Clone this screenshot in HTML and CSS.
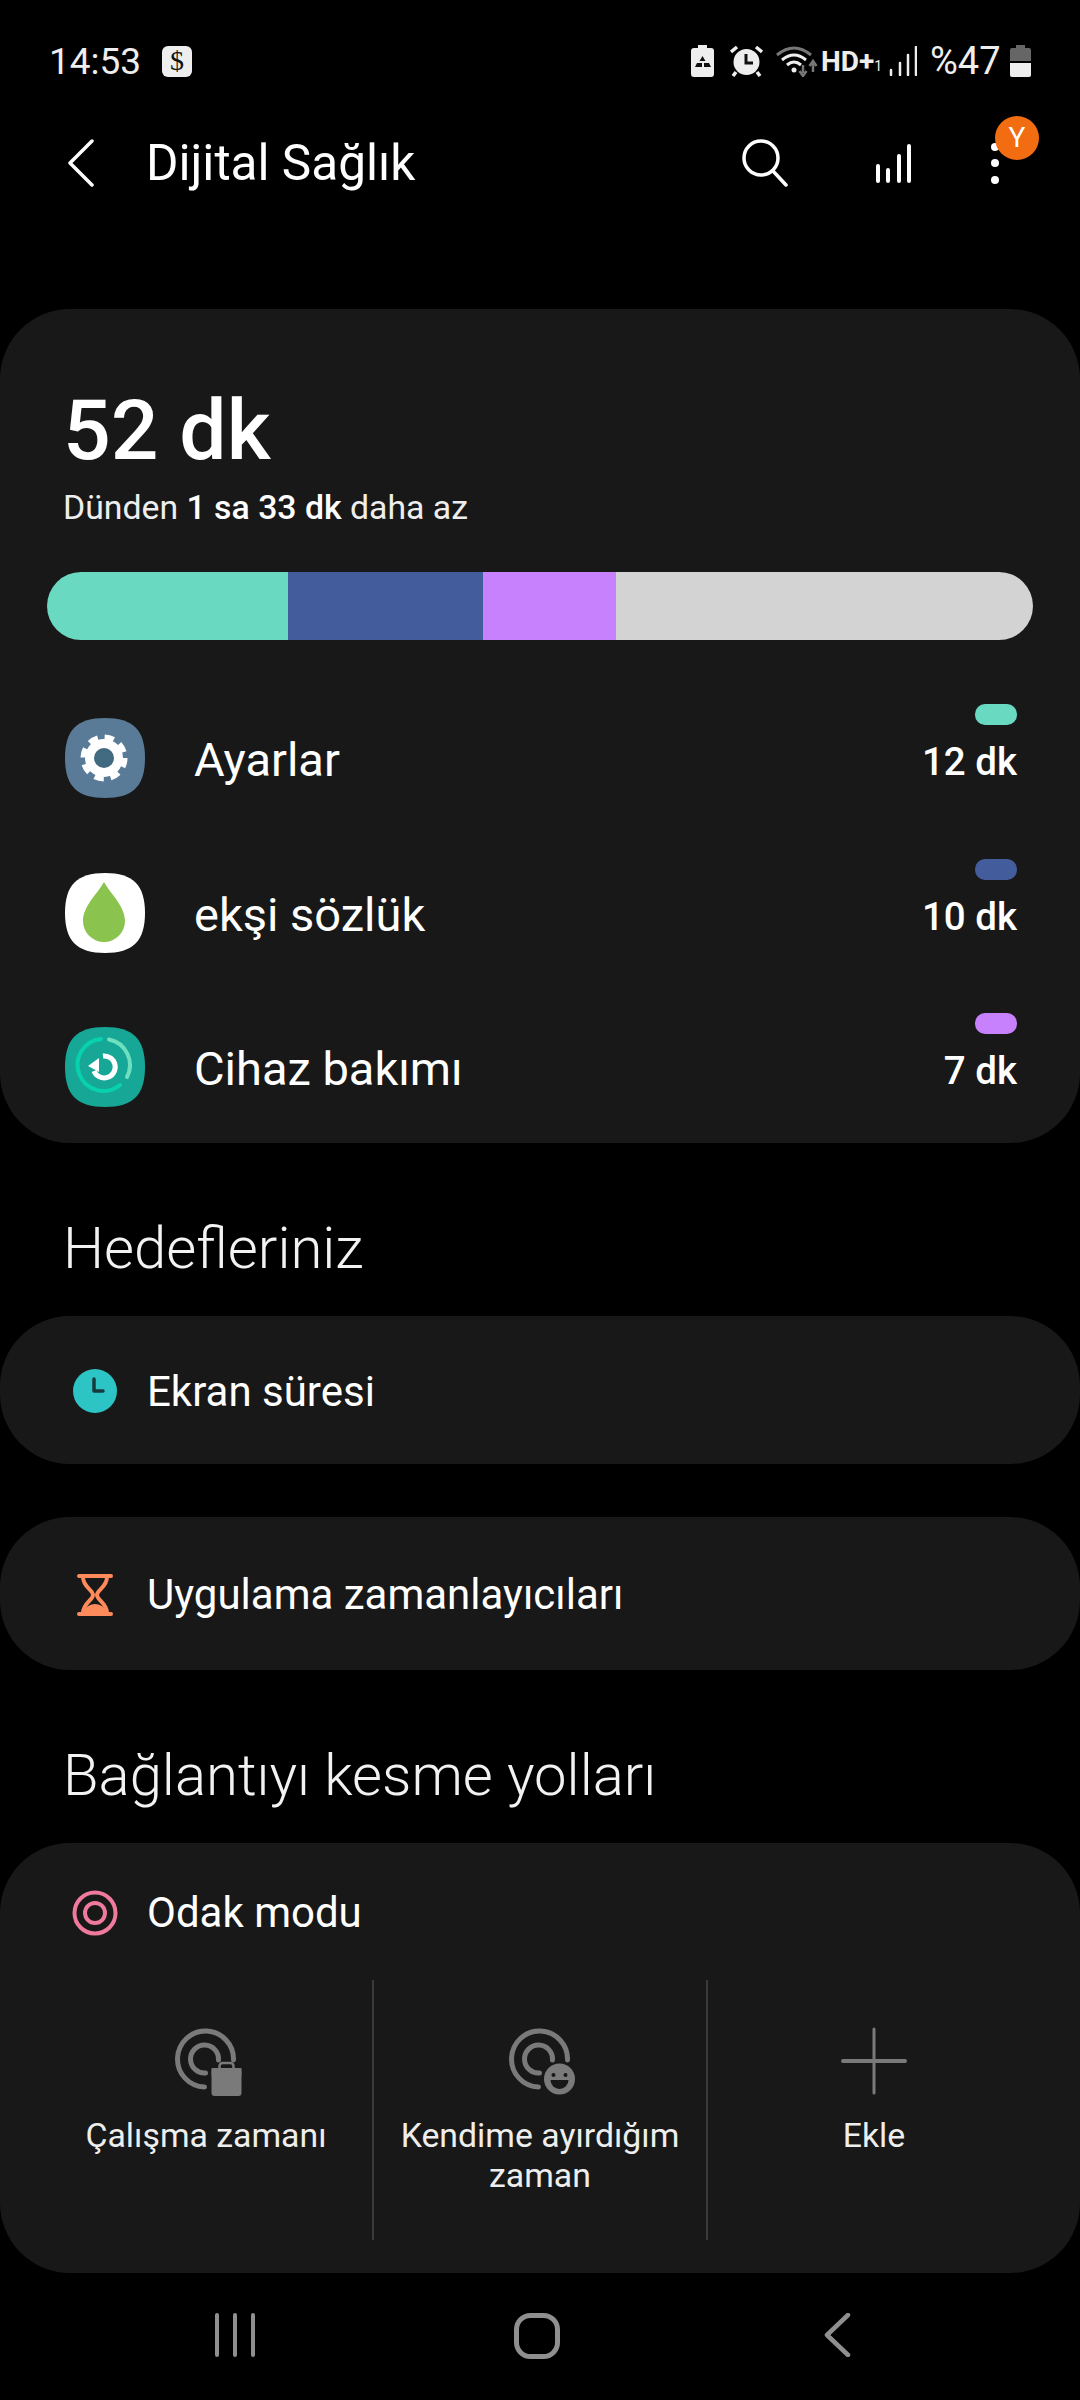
FILE: index.html
```html
<!DOCTYPE html>
<html lang="tr">
<head>
    <meta charset="UTF-8">
    <meta name="viewport" content="width=device-width, initial-scale=1.0">
    <title>Dijital Sağlık</title>
    <link rel="stylesheet" href="styles.css">
</head>
<body>

    <div class="status-bar">
        <span class="clock">14:53</span>
        <span class="bank-badge">$</span>
        <div class="status-right">
            <svg class="st-saver" width="23" height="32" viewBox="0 0 23 32"><path d="M7 0h9v3h4q3 0 3 3v23q0 3-3 3H3q-3 0-3-3V6q0-3 3-3h4z" fill="#eee"/><path d="M11.500 11l3 5h-6zM6 18h5v4H4zM13 18h5l2 4h-7z" fill="#111"/></svg>
            <svg class="st-alarm" width="33" height="32" viewBox="0 0 33 32"><circle cx="16.500" cy="17" r="13" fill="#eee"/><path d="M16 9v9h7" fill="none" stroke="#111" stroke-width="3"/><path d="M1 7l6-5M32 7l-6-5M6 27l-3 4M27 27l3 4" stroke="#eee" stroke-width="3.500"/></svg>
            <svg class="st-wifi" width="42" height="32" viewBox="0 0 42 32"><path d="M1 10q17-14 34 0" fill="none" stroke="#777" stroke-width="3"/><path d="M6 15q12-10 24 0M11 20q7-6 14 0" fill="none" stroke="#eee" stroke-width="3"/><circle cx="18" cy="25" r="2.500" fill="#eee"/><path d="M27 20v8M23.500 26l3.500 5 3.500-5M37 27v-10M33.500 21l3.500-5 3.500 5" fill="none" stroke="#777" stroke-width="2.500"/></svg>
            <span class="st-hd">HD+<span class="st-sim">1</span></span>
            <svg class="st-signal" width="28" height="30" viewBox="0 0 28 30"><path d="M2 24v5M11 17v12M19 9v20M27 1v28" stroke="#eee" stroke-width="2.500" stroke-linecap="round"/></svg>
            <span class="st-pct">%47</span>
            <svg class="st-batt" width="21" height="32" viewBox="0 0 21 32"><path d="M6 0h9v3h4q2 0 2 2v11H0V5q0-2 2-2h4z" fill="#666"/><path d="M0 18h21v12q0 2-2 2H2q-2 0-2-2z" fill="#eee"/></svg>
        </div>
    </div>

    <div class="app-bar">
        <svg class="back-icon" width="26" height="48" viewBox="0 0 26 48"><path d="M24 2L2 24l22 22" fill="none" stroke="#fff" stroke-width="3.500" stroke-linecap="round" stroke-linejoin="round"/></svg>
        <span class="app-title">Dijital Sağlık</span>
        <div class="app-actions">
            <svg width="46" height="48" viewBox="0 0 46 48"><circle cx="19" cy="19" r="17" fill="none" stroke="#fff" stroke-width="3.500"/><path d="M31 32l13 14" stroke="#fff" stroke-width="3.500" stroke-linecap="round"/></svg>
            <svg class="bars-icon" width="38" height="40" viewBox="0 0 38 40"><path d="M3 23v15M13 27v11M24 13v25M34 3v35" stroke="#fff" stroke-width="4" stroke-linecap="round"/></svg>
            <div class="more-btn">
                <i class="dot"></i><i class="dot"></i><i class="dot"></i>
                <span class="new-badge">Y</span>
            </div>
        </div>
    </div>

    <div class="card usage-card">
        <div class="total">52 dk</div>
        <div class="compare">Dünden <b>1 sa 33 dk</b> daha az</div>
        <div class="usage-bar">
            <span class="seg seg-one"></span>
            <span class="seg seg-two"></span>
            <span class="seg seg-three"></span>
            <span class="seg seg-rest"></span>
        </div>

        <div class="app-row">
            <svg class="app-icon" width="80" height="80" viewBox="0 0 80 80"><path class="squircle" d="M40 0C68 0 80 12 80 40S68 80 40 80 0 68 0 40 12 0 40 0Z" fill="#5a7b97"/><circle cx="39" cy="40" r="19" fill="#fff"/><circle cx="39" cy="40" r="21" fill="none" stroke="#fff" stroke-width="5" stroke-dasharray="9.500 7"/><circle cx="39" cy="40" r="10" fill="#41697f"/></svg>
            <span class="app-name">Ayarlar</span>
            <div class="app-time">
                <span class="chip chip-one"></span>
                <span>12 dk</span>
            </div>
        </div>
        <div class="app-row">
            <svg class="app-icon" width="80" height="80" viewBox="0 0 80 80"><path d="M40 0C68 0 80 12 80 40S68 80 40 80 0 68 0 40 12 0 40 0Z" fill="#fff"/><path d="M39 9C33 20 18 33 18 48A21 21 0 0 0 60 48C60 33 45 20 39 9Z" fill="#8bc34f"/></svg>
            <span class="app-name">ekşi sözlük</span>
            <div class="app-time">
                <span class="chip chip-two"></span>
                <span>10 dk</span>
            </div>
        </div>
        <div class="app-row">
            <svg class="app-icon" width="80" height="80" viewBox="0 0 80 80"><path d="M40 0C68 0 80 12 80 40S68 80 40 80 0 68 0 40 12 0 40 0Z" fill="#17a797"/><path d="M36 12A26 26 0 1 0 55 58" fill="none" stroke="#08d2ae" stroke-width="4" stroke-linecap="round"/><path d="M44 12.500A26 26 0 0 1 62 50" fill="none" stroke="#6ee0c0" stroke-width="4" stroke-linecap="round"/><path d="M38 29A11 11 0 1 1 29 44" fill="none" stroke="#fff" stroke-width="5"/><path d="M23 39l11-8v14z" fill="#fff"/></svg>
            <span class="app-name">Cihaz bakımı</span>
            <div class="app-time">
                <span class="chip chip-three"></span>
                <span>7 dk</span>
            </div>
        </div>
    </div>

    <h2 class="section-title">Hedefleriniz</h2>

    <div class="card link-card screen-card">
        <svg class="link-icon" width="46" height="46" viewBox="0 0 46 46"><circle cx="23" cy="23" r="22" fill="#2cc4c4"/><path d="M22 11v12h9" fill="none" stroke="#173a3c" stroke-width="3.500" stroke-linecap="round" stroke-linejoin="round"/></svg>
        <span>Ekran süresi</span>
    </div>

    <div class="card link-card timer-card">
        <svg class="link-icon" width="46" height="42" viewBox="0 0 46 42"><path d="M7 2h32M7 40h32" stroke="#ff8a5b" stroke-width="4" stroke-linecap="round"/><path d="M11 3c0 10 10 13 10 18S11 29 11 39M35 3c0 10-10 13-10 18s10 8 10 18" fill="none" stroke="#ff8a5b" stroke-width="4"/><path d="M11 39c1-6 8-9 12-9s11 3 12 9z" fill="#ff8a5b"/></svg>
        <span>Uygulama zamanlayıcıları</span>
    </div>

    <h2 class="section-title">Bağlantıyı kesme yolları</h2>

    <div class="card focus-card">
        <div class="focus-head">
            <svg class="link-icon" width="46" height="46" viewBox="0 0 46 46"><circle cx="23" cy="23" r="20.500" fill="none" stroke="#f07a9e" stroke-width="4"/><circle cx="23" cy="23" r="10" fill="none" stroke="#f07a9e" stroke-width="4"/></svg>
            <span>Odak modu</span>
        </div>
        <div class="focus-grid">
            <div class="focus-item">
                <svg width="80" height="70" viewBox="1.500 0 80 70"><path d="M69 34A28 28 0 1 0 40 61" fill="none" stroke="#7a7a7a" stroke-width="5" stroke-linecap="round"/><path d="M54 34A14 14 0 1 0 41 47" fill="none" stroke="#7a7a7a" stroke-width="5" stroke-linecap="round"/><path d="M47 42h30v25q0 3-3 3H50q-3 0-3-3z" fill="#7a7a7a"/><rect x="47" y="42" width="30" height="10" rx="4" fill="#7a7a7a"/><rect x="55" y="37" width="14" height="9" rx="3" fill="none" stroke="#7a7a7a" stroke-width="2.500"/></svg>
                <span>Çalışma zamanı</span>
            </div>
            <div class="focus-item">
                <svg width="80" height="70" viewBox="1.500 0 80 70"><path d="M69 34A28 28 0 1 0 40 61" fill="none" stroke="#7a7a7a" stroke-width="5" stroke-linecap="round"/><path d="M54 34A14 14 0 1 0 41 47" fill="none" stroke="#7a7a7a" stroke-width="5" stroke-linecap="round"/><circle cx="61" cy="53" r="15.500" fill="#7a7a7a"/><circle cx="55" cy="49" r="2" fill="#181818"/><circle cx="67" cy="49" r="2" fill="#181818"/><path d="M52 54h18a9 9 0 0 1-18 0z" fill="#181818"/></svg>
                <span>Kendime ayırdığım zaman</span>
            </div>
            <div class="focus-item">
                <svg width="80" height="70" viewBox="0 0 80 70"><path d="M40 3v64" stroke="#7a7a7a" stroke-width="3" stroke-linecap="round"/><path d="M9 35h62" stroke="#7a7a7a" stroke-width="4" stroke-linecap="round"/></svg>
                <span>Ekle</span>
            </div>
        </div>
    </div>

    <div class="nav-bar">
        <svg width="44" height="44" viewBox="0 0 44 44"><path d="M4 2v40M22 2v40M40 2v40" stroke="#8f8f8f" stroke-width="4" stroke-linecap="round"/></svg>
        <svg class="nav-home" width="46" height="46" viewBox="0 0 46 46"><rect x="2.500" y="2.500" width="41" height="41" rx="14" fill="none" stroke="#8f8f8f" stroke-width="5"/></svg>
        <svg width="28" height="44" viewBox="0 0 28 44"><path d="M25 2L4 22l21 20" fill="none" stroke="#8f8f8f" stroke-width="4.500" stroke-linecap="round" stroke-linejoin="round"/></svg>
    </div>

</body>
</html>
```

FILE: styles.css
```css
* {
    box-sizing: border-box;
}

body {
    width: 1080px;
    height: 2400px;
    margin: 0;
    background-color: black;
    color: white;
    font-family: Roboto, "Noto Sans", sans-serif;
    overflow: hidden;
}

/* status bar */
.status-bar {
    display: flex;
    align-items: center;
    height: 122px;
    padding: 0 49px 0 49px;
    color: #eee;
}

.clock {
    font-size: 37px;
    width: 113px;
}

.bank-badge {
    display: flex;
    align-items: center;
    justify-content: center;
    width: 30px;
    height: 31px;
    border-radius: 6px;
    background-color: #eee;
    color: #111;
    font-family: "Liberation Serif", serif;
    font-size: 28px;
}

.status-right {
    display: flex;
    align-items: center;
    margin-left: auto;
}

.st-alarm {
    margin-left: 16px;
}

.st-wifi {
    margin-left: 13px;
}

.st-hd {
    margin-left: 3px;
    font-size: 28px;
    font-weight: bold;
    width: 68px;
}

.st-sim {
    font-size: 14px;
    font-weight: normal;
}

.st-pct {
    margin-left: 13px;
    font-size: 38px;
    width: 80px;
}

/* app bar */
.app-bar {
    display: flex;
    align-items: center;
    height: 82px;
    padding-left: 68px;
}

.app-title {
    margin-left: 52px;
    font-size: 49.500px;
}

.app-actions {
    display: flex;
    align-items: center;
    margin-left: auto;
}

.bars-icon {
    margin-left: 87px;
}

.more-btn {
    position: relative;
    display: flex;
    flex-direction: column;
    align-items: center;
    gap: 8.500px;
    width: 8px;
    margin-left: 78px;
    margin-right: 81px;
}

.dot {
    width: 8px;
    height: 8px;
    border-radius: 50%;
    background-color: white;
}

.new-badge {
    position: absolute;
    top: -27px;
    left: 4px;
    display: flex;
    align-items: center;
    justify-content: center;
    width: 44px;
    height: 44px;
    border-radius: 50%;
    background-color: #f26c12;
    font-size: 28px;
}

/* cards */
.card {
    background-color: #181818;
    border-radius: 70px;
}

.usage-card {
    height: 834px;
    margin-top: 105px;
    padding-top: 77px;
}

.total {
    margin-left: 63px;
    height: 90px;
    line-height: 90px;
    font-size: 84px;
    font-weight: 500;
}

.compare {
    margin-left: 63px;
    margin-top: 10px;
    height: 44px;
    line-height: 44px;
    font-size: 33.800px;
    color: #eee;
}

.compare b {
    font-weight: 500;
    color: white;
}

.usage-bar {
    display: flex;
    height: 68px;
    margin: 42px 47px 41px 47px;
    border-radius: 34px;
    overflow: hidden;
}

.seg-one {
    width: 241px;
    background-color: #69d9c2;
}

.seg-two {
    width: 195px;
    background-color: #435c9b;
}

.seg-three {
    width: 133px;
    background-color: #c781fc;
}

.seg-rest {
    flex: 1;
    background-color: #d3d3d3;
}

.app-row {
    display: flex;
    align-items: center;
    height: 154.500px;
    padding: 0 63px 0 65px;
}

.app-name {
    margin-left: 49px;
    font-size: 47px;
    padding-top: 3px;
}

.app-time {
    display: flex;
    flex-direction: column;
    align-items: flex-end;
    gap: 14px;
    margin-left: auto;
    margin-bottom: 28px;
    font-size: 38.500px;
    line-height: 45px;
    font-weight: 500;
}

.chip {
    width: 42px;
    height: 21px;
    border-radius: 10px;
}

.chip-one {
    background-color: #69d9c2;
}

.chip-two {
    background-color: #435c9b;
}

.chip-three {
    background-color: #c781fc;
}

.section-title {
    height: 60px;
    line-height: 60px;
    margin: 75px 0 38px 63px;
    font-size: 58px;
    font-weight: 300;
    color: #f2f2f2;
}

.link-card {
    display: flex;
    align-items: center;
    padding: 2px 0 0 72px;
    font-size: 42px;
}

.link-icon {
    margin-right: 29px;
}

.screen-card {
    height: 148px;
    margin-bottom: 53px;
}

.timer-card {
    height: 153px;
}

.focus-card {
    height: 430px;
}

.focus-head {
    display: flex;
    align-items: center;
    height: 137px;
    padding: 2px 0 0 72px;
    font-size: 42px;
}

.focus-grid {
    display: flex;
    height: 260px;
    padding: 0 40px;
}

.focus-item {
    flex: 1;
    display: flex;
    flex-direction: column;
    align-items: center;
    padding: 46px 10px 0 10px;
    border-left: 2px solid #3a3a3a;
    font-size: 33.800px;
    line-height: 40px;
    text-align: center;
    color: #eee;
}

.focus-item:first-child {
    border-left: none;
}

.focus-item svg {
    margin-bottom: 20px;
}

/* bottom nav */
.nav-bar {
    display: flex;
    justify-content: space-between;
    align-items: flex-start;
    padding: 40px 229px 0 213px;
}

.nav-home {
    margin-left: -6px;
}
```
